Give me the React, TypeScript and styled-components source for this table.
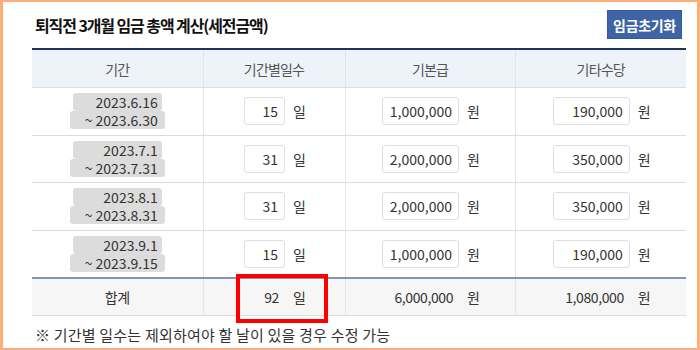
import React from 'react'
import styled, { createGlobalStyle } from 'styled-components'

type Period = {
  from: string
  to: string
  days: string
  base: string
  extra: string
}

const periods: Period[] = [
  { from: '2023.6.16', to: '~ 2023.6.30', days: '15', base: '1,000,000', extra: '190,000' },
  { from: '2023.7.1', to: '~ 2023.7.31', days: '31', base: '2,000,000', extra: '350,000' },
  { from: '2023.8.1', to: '~ 2023.8.31', days: '31', base: '2,000,000', extra: '350,000' },
  { from: '2023.9.1', to: '~ 2023.9.15', days: '15', base: '1,000,000', extra: '190,000' },
]

const GlobalStyle = createGlobalStyle`
  html, body {
    margin: 0;
    padding: 0;
    background: #fff;
  }
  body {
    font-family: "Noto Sans CJK KR", "Noto Sans", sans-serif;
    color: #333;
  }
`

export default function App() {
  return (
    <>
      <GlobalStyle />
      <Frame>
        <TitleBar>
          <Title>퇴직전 3개월 임금 총액 계산(세전금액)</Title>
          <ResetButton type="button">임금초기화</ResetButton>
        </TitleBar>

        <Table>
          <colgroup>
            <col style={{ width: 171 }} />
            <col style={{ width: 142 }} />
            <col style={{ width: 170 }} />
            <col style={{ width: 171 }} />
          </colgroup>
          <thead>
            <tr>
              <Th>기간</Th>
              <Th>기간별일수</Th>
              <Th>기본급</Th>
              <Th>기타수당</Th>
            </tr>
          </thead>
          <tbody>
            {periods.map((p) => (
              <tr key={p.from}>
                <Td>
                  <DateStack>
                    <DateLine $width={89} $pad={4}>{p.from}</DateLine>
                    <DateLine $width={95} $pad={7}>{p.to}</DateLine>
                  </DateStack>
                </Td>
                <Td>
                  <Field>
                    <NumBox $width={41} defaultValue={p.days} />
                    <Unit>일</Unit>
                  </Field>
                </Td>
                <Td>
                  <Field>
                    <NumBox $width={77} defaultValue={p.base} />
                    <Unit>원</Unit>
                  </Field>
                </Td>
                <Td>
                  <Field>
                    <NumBox $width={77} defaultValue={p.extra} />
                    <Unit>원</Unit>
                  </Field>
                </Td>
              </tr>
            ))}
          </tbody>
          <tfoot>
            <tr>
              <SumTd>합계</SumTd>
              <SumTd>
                <Field>
                  <SumValue $width={41}>92</SumValue>
                  <Unit>일</Unit>
                </Field>
                <Highlight />
              </SumTd>
              <SumTd>
                <Field>
                  <SumValue $width={77}>6,000,000</SumValue>
                  <Unit>원</Unit>
                </Field>
              </SumTd>
              <SumTd>
                <Field>
                  <SumValue $width={77}>1,080,000</SumValue>
                  <Unit>원</Unit>
                </Field>
              </SumTd>
            </tr>
          </tfoot>
        </Table>

        <Note>※ 기간별 일수는 제외하여야 할 날이 있을 경우 수정 가능</Note>
      </Frame>
    </>
  )
}

const Frame = styled.div`
  box-sizing: border-box;
  width: 700px;
  height: 350px;
  border: 3px solid #ffad78;
  border-top-width: 2px;
  border-bottom-width: 2px;
  padding: 8px 11px 0 29px;
  overflow: hidden;
`

const TitleBar = styled.div`
  display: flex;
  align-items: center;
  justify-content: space-between;
  height: 29px;
  margin-bottom: 9px;
`

const Title = styled.h2`
  margin: 0 0 0 3px;
  font-size: 16px;
  font-weight: 700;
  color: #111;
  letter-spacing: -1.1px;
`

const ResetButton = styled.button`
  box-sizing: border-box;
  height: 29px;
  width: 75px;
  margin-right: 4px;
  padding: 0;
  border: 1px solid #35599a;
  background: #3e64a6;
  color: #fff;
  font-family: inherit;
  font-size: 14px;
  font-weight: 700;
  letter-spacing: -0.3px;
`

const Table = styled.table`
  width: 654px;
  table-layout: fixed;
  border-collapse: collapse;
  border-top: 2px solid #1f3355;
`

const Th = styled.th`
  height: 37px;
  padding: 0;
  background: #eef3fa;
  font-weight: 400;
  font-size: 14px;
  color: #555;
  letter-spacing: -0.8px;
  border-bottom: 1px solid #dcdfe4;
  & + & {
    border-left: 1px solid #dfe3ea;
  }
`

const Td = styled.td`
  height: 46.5px;
  padding: 0;
  font-size: 14px;
  border-bottom: 1px solid #dcdcdc;
  & + & {
    border-left: 1px solid #e6e6e6;
  }
`

const SumTd = styled.td`
  position: relative;
  height: 36px;
  padding: 0;
  background: #f6f6f6;
  text-align: center;
  font-size: 14px;
  letter-spacing: -0.4px;
  border-top: 2px solid #8696aa;
  border-bottom: 1px solid #dcdcdc;
  & + & {
    border-left: 1px solid #e6e6e6;
  }
`

const DateStack = styled.div`
  display: flex;
  flex-direction: column;
  align-items: center;
`

const DateLine = styled.span<{ $width: number; $pad: number }>`
  box-sizing: border-box;
  width: ${(p) => p.$width}px;
  padding-right: ${(p) => p.$pad}px;
  height: 18px;
  line-height: 18px;
  overflow: hidden;
  background: #dcdcdc;
  border-radius: 3px;
  text-align: right;
  white-space: pre;
  color: #333;
  font-size: 14px;
`

const Field = styled.div`
  display: flex;
  align-items: center;
  justify-content: center;
  gap: 8px;
`

const NumBox = styled.input<{ $width: number }>`
  box-sizing: border-box;
  width: ${(p) => p.$width}px;
  height: 28px;
  padding: 0 6px;
  border: 1px solid #dedede;
  border-radius: 3px;
  background: #fff;
  text-align: right;
  font-family: inherit;
  font-size: 14px;
  color: #333;
  outline: none;
`

const SumValue = styled.span<{ $width: number }>`
  box-sizing: border-box;
  width: ${(p) => p.$width}px;
  padding: 0 6px;
  text-align: right;
`

const Unit = styled.span`
  width: 11px;
  font-size: 14px;
  color: #333;
`

const Highlight = styled.div`
  position: absolute;
  left: 32px;
  top: -5px;
  width: 92px;
  height: 49px;
  box-sizing: border-box;
  border: 4px solid #ff0000;
  pointer-events: none;
`

const Note = styled.p`
  margin: 8px 0 0 3px;
  font-size: 15px;
  color: #333;
  letter-spacing: 0.2px;
`
